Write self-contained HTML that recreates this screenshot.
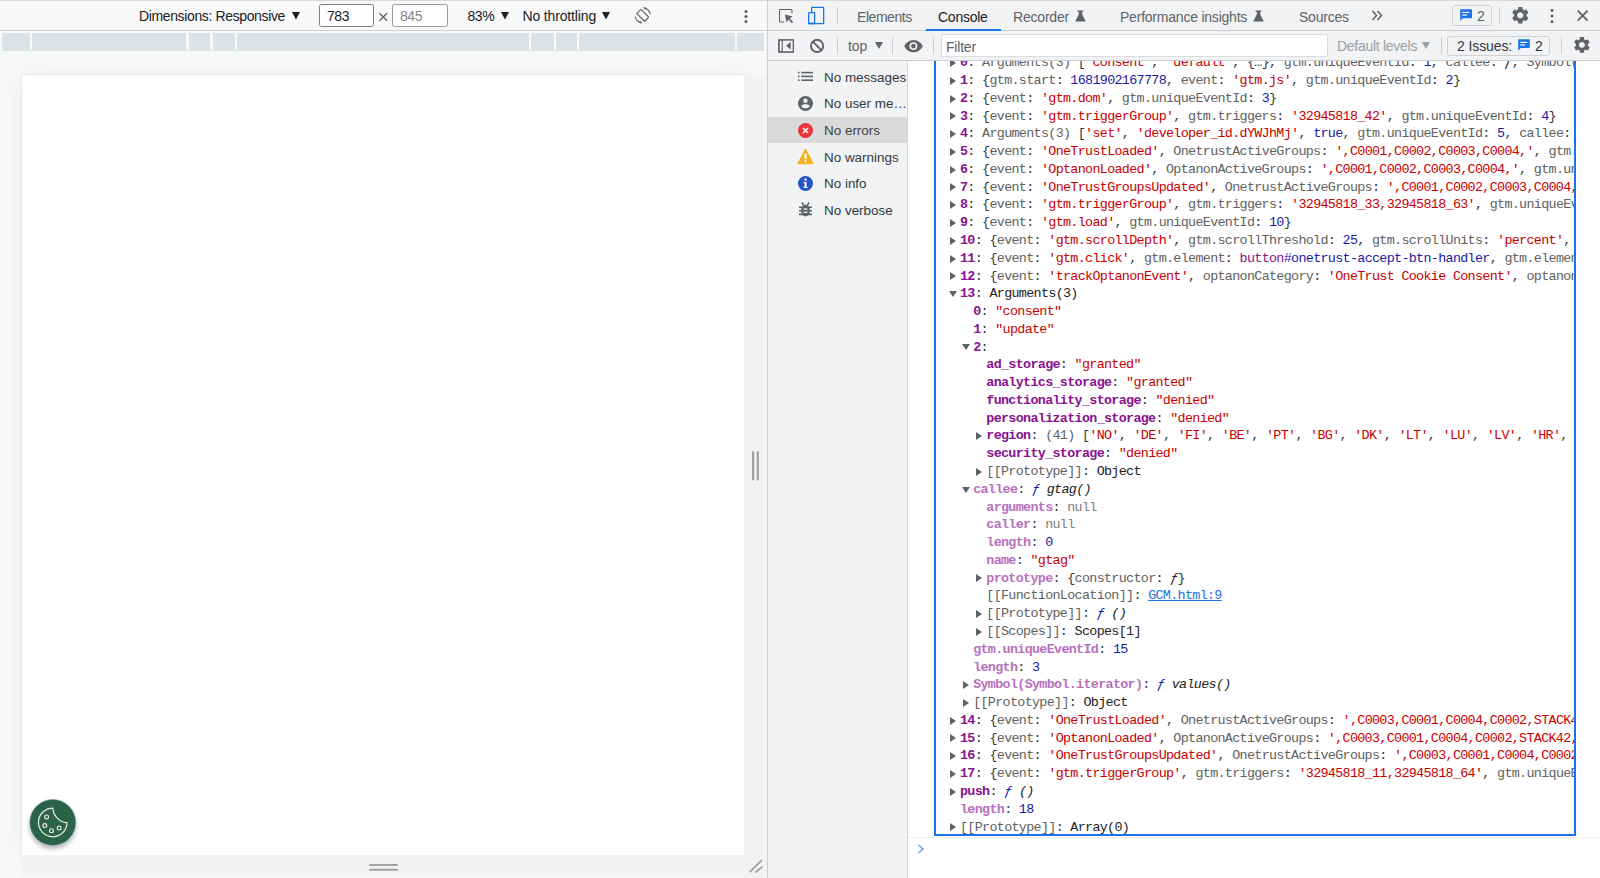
<!DOCTYPE html>
<html><head><meta charset="utf-8">
<style>
*{box-sizing:border-box;margin:0;padding:0}
html,body{width:1600px;height:878px;overflow:hidden;background:#f7f9f8;font-family:"Liberation Sans",sans-serif;}
.a{position:absolute}
.t{position:absolute;white-space:pre;font-size:14px;letter-spacing:-0.45px;line-height:16px;color:#202124}
/* left area */
#ltb{left:0;top:0;width:767px;height:31px;background:#f8f9f9;border-top:1px solid #d6d8da;border-bottom:1px solid #cdd0d4}
#ruler{left:2px;top:33px;width:762px;height:17.7px;background:#dee1e6}
.rsep{position:absolute;top:-0.5px;width:2.2px;height:17.5px;background:#f9fafa}
#vp{left:22px;top:75px;width:722px;height:780px;background:#fff;box-shadow:0 0 0 1px rgba(0,0,0,0.05),0 0 22px rgba(0,0,0,0.055)}
#rstrip{left:744px;top:75px;width:23px;height:803px;background:#f1f3f4}
#bstrip{left:22px;top:855px;width:745px;height:22px;background:#f1f3f4}
.inp{position:absolute;top:4px;height:23px;background:#fff;border:1px solid #7d7d7d;border-radius:2.5px}
/* devtools */
#dt{left:767px;top:0;width:833px;height:878px;background:#f1f3f4;border-left:1px solid #cdd0d4}
#tabs{left:768px;top:0;width:832px;height:31px;border-top:1px solid #d6d8da;border-bottom:1px solid #cacdd1;background:#f1f3f4}
#tb2{left:768px;top:31px;width:832px;height:30px;border-bottom:1px solid #cacdd1;background:#f1f3f4}
#side{left:768px;top:61px;width:140px;height:817px;background:#f1f3f4;border-right:1px solid #d3d5d8}
#con{left:908px;top:61px;width:692px;height:817px;background:#fff}
.sep{position:absolute;width:1px;background:#cacdd1}
.srow{position:absolute;left:768px;width:139px;height:26.6px}
.stxt{position:absolute;left:824px;font-size:13.45px;line-height:16px;color:#303942;white-space:pre}
/* console */
#clip{left:934px;top:61px;width:642px;height:776px;overflow:hidden}
#box{left:934px;top:61px;width:641.6px;height:774.7px;border:2.5px solid #1a73e8;border-top:none}
.ln{position:absolute;height:17.775px;line-height:17.775px;font-family:"Liberation Mono",monospace;font-size:13.4px;letter-spacing:-0.68px;white-space:pre;color:#303942}
.tri{position:absolute;width:0;height:0}
.tr{border-top:3.5px solid transparent;border-bottom:3.5px solid transparent;border-left:6px solid #5f6368}
.td{border-left:3.5px solid transparent;border-right:3.5px solid transparent;border-top:6px solid #5f6368}
.k{color:#881391;font-weight:bold}
.kd{color:#c17ec1;font-weight:bold}
.s{color:#c80000}
.n{color:#1a1aa6}
.g{color:#5e5e5e}
.b{color:#222}
.nl{color:#808080}
.f{color:#0d22aa;font-style:italic}
.i{font-style:italic;color:#222}
.lnk{color:#1a73e8;text-decoration:underline}

#clip i{font-style:normal}
.ln b{position:absolute;top:0;width:0;height:0}
.tr{left:-10px;margin-top:4.8px;border-top:4.1px solid transparent;border-bottom:4.1px solid transparent;border-left:6px solid #5f6368}
.td{left:-11.4px;margin-top:5.9px;border-left:4.1px solid transparent;border-right:4.1px solid transparent;border-top:6px solid #5f6368}
#clip .k{color:#881391;font-weight:bold}
#clip .d{color:#b871bd;font-weight:bold}
#clip .s{color:#c80000}
#clip .n{color:#1a1aa6}
#clip .g{color:#616161}
#clip .b{color:#222}
#clip .x{color:#808080}
#clip .f{color:#0d22aa;font-style:italic}
#clip .i{font-style:italic;color:#222}
#clip .l{color:#1a73e8;text-decoration:underline}
#clip .t{color:#881280;position:static;font-size:inherit;line-height:inherit;letter-spacing:inherit}
</style></head><body>

<!-- ============ LEFT DEVICE AREA ============ -->
<div class="a" id="ltb"></div>
<div class="t" style="left:139px;top:8px;color:#202124;letter-spacing:-0.37px">Dimensions: Responsive</div>
<svg class="a" style="left:291.5px;top:11.5px" width="8" height="7.5"><path d="M0 0H8L4 7.5Z" fill="#202124"/></svg>
<div class="inp" style="left:319px;width:55px"></div>
<div class="t" style="left:327px;top:7.6px">783</div>
<svg class="a" style="left:378px;top:12px" width="11" height="10"><path d="M1.4 1.2L9.1 8.8M9.1 1.2L1.4 8.8" stroke="#5f6368" stroke-width="1.35"/></svg>
<div class="inp" style="left:392px;width:56px;border-color:#9a9a9a"></div>
<div class="t" style="left:400px;top:7.6px;color:#80868b">845</div>
<div class="t" style="left:467.5px;top:8px">83%</div>
<svg class="a" style="left:501.2px;top:11.5px" width="8" height="7.5"><path d="M0 0H8L4 7.5Z" fill="#202124"/></svg>
<div class="t" style="left:522.5px;top:8px;letter-spacing:-0.15px">No throttling</div>
<svg class="a" style="left:601.5px;top:11.5px" width="8" height="7.5"><path d="M0 0H8L4 7.5Z" fill="#202124"/></svg>
<svg class="a" style="left:634px;top:7px" width="18" height="17" viewBox="0 0 18 17"><g transform="translate(8.75 8.3) rotate(-45)"><rect x="-3" y="-5.6" width="6" height="11.2" rx="0.9" fill="none" stroke="#5f6368" stroke-width="1.15"/></g><path d="M10.3 1.1A7.6 7.6 0 0 1 16.2 7" fill="none" stroke="#5f6368" stroke-width="1.15"/><path d="M7.2 15.6A7.6 7.6 0 0 1 1.3 9.6" fill="none" stroke="#5f6368" stroke-width="1.15"/><path d="M9.3 0.3L12.2 0.6L10.6 2.6Z" fill="#5f6368"/><path d="M8.2 16.4L5.3 16L6.9 14Z" fill="#5f6368"/></svg>
<svg class="a" style="left:742px;top:9px" width="8" height="15"><circle cx="4" cy="2.5" r="1.6" fill="#5f6368"/><circle cx="4" cy="7.5" r="1.6" fill="#5f6368"/><circle cx="4" cy="12.5" r="1.6" fill="#5f6368"/></svg>

<div class="a" id="ruler">
 <div class="rsep" style="left:27.5px"></div> <div class="rsep" style="left:184.4px"></div> <div class="rsep" style="left:208.4px"></div> <div class="rsep" style="left:233.2px"></div> <div class="rsep" style="left:526.8px"></div> <div class="rsep" style="left:552.0px"></div> <div class="rsep" style="left:575.2px"></div> <div class="rsep" style="left:733.0px"></div>
</div>
<div class="a" id="vp"></div>
<div class="a" id="rstrip"></div>
<div class="a" id="bstrip"></div>
<!-- cookie + handles -->
<svg class="a" style="left:26px;top:796px;overflow:visible" width="54" height="54" viewBox="0 0 54 54"><defs><filter id="sh" x="-50%" y="-50%" width="200%" height="200%"><feGaussianBlur in="SourceAlpha" stdDeviation="2.6"/><feOffset dy="2.5"/><feComponentTransfer><feFuncA type="linear" slope="0.32"/></feComponentTransfer><feMerge><feMergeNode/><feMergeNode in="SourceGraphic"/></feMerge></filter></defs>
<circle cx="26.75" cy="26.45" r="22.9" fill="#2b6247" stroke="#5d86a8" stroke-width="0.5" filter="url(#sh)"/>
<path d="M26.8 12.15A14.3 14.3 0 1 0 41.05 26.8A15.7 15.7 0 0 1 26.8 12.15Z" fill="none" stroke="#e6ebe3" stroke-width="1.25" stroke-linejoin="round"/>
<circle cx="20.6" cy="20.9" r="1.95" fill="none" stroke="#e6ebe3" stroke-width="1.15"/><circle cx="18.8" cy="29.5" r="1.95" fill="none" stroke="#e6ebe3" stroke-width="1.15"/><circle cx="25.5" cy="34.7" r="1.95" fill="none" stroke="#e6ebe3" stroke-width="1.15"/><circle cx="33.2" cy="32" r="1.95" fill="none" stroke="#e6ebe3" stroke-width="1.15"/></svg>
<svg class="a" style="left:750px;top:449px" width="12" height="34"><path d="M3.1 3V30.5M7.8 3V30.5" stroke="#a2a2a2" stroke-width="2.2" stroke-linecap="round"/></svg>
<svg class="a" style="left:367px;top:862px" width="33" height="11"><path d="M3 3H30M3 7.7H30" stroke="#a2a2a2" stroke-width="2" stroke-linecap="round"/></svg>
<svg class="a" style="left:748px;top:858px" width="16" height="16"><path d="M2.2 13.6L13.3 2.6M8 14L13.9 8.9" stroke="#a2a2a2" stroke-width="1.9" stroke-linecap="round"/></svg>


<!-- ============ DEVTOOLS ============ -->
<div class="a" id="dt"></div>
<div class="a" id="tabs"></div>
<div class="a" id="tb2"></div>
<div class="a" id="side"></div>
<div class="a" id="con"></div>

<!-- tab bar -->
<svg class="a" style="left:777px;top:7px" width="18" height="18" viewBox="0 0 18 18"><path d="M7 14.95H3.3Q2.55 14.95 2.55 14.2V3.3Q2.55 2.55 3.3 2.55H14.2Q14.95 2.55 14.95 3.3V6.3" fill="none" stroke="#5f6368" stroke-width="1.1"/><path d="M8 7.5L15.7 9.6L12.6 11.4L16.2 15L15 16.2L11.4 12.6L9.6 15.7Z" fill="#5f6368"/></svg>
<svg class="a" style="left:806px;top:5px" width="20" height="21" viewBox="0 0 20 21"><rect x="5.6" y="2.35" width="12.05" height="16.3" rx="0.8" fill="none" stroke="#1a73e8" stroke-width="1.25"/><rect x="2.65" y="7.65" width="5.95" height="10.95" rx="0.6" fill="#f1f3f4" stroke="#1a73e8" stroke-width="1.3"/><rect x="2" y="17.6" width="7" height="1.6" fill="#1a73e8"/></svg>
<div class="sep" style="left:837px;top:7px;height:17px"></div>
<div class="t" style="left:857px;top:8.5px;color:#5f6368">Elements</div>
<div class="t" style="left:938px;top:8.5px;color:#202124;letter-spacing:-0.25px">Console</div>
<div class="a" style="left:926px;top:29px;width:75px;height:2px;background:#1a73e8"></div>
<div class="t" style="left:1013px;top:8.5px;color:#5f6368;letter-spacing:-0.2px">Recorder</div>
<svg class="a" style="left:1074.5px;top:9.5px" width="11" height="12" viewBox="0 0 11 12"><path d="M2.5 0.5H8.5V1.8H7.2V4.5L10.8 11.5H0.2L3.8 4.5V1.8H2.5Z" fill="#5f6368"/></svg>
<div class="t" style="left:1120px;top:8.5px;color:#5f6368;letter-spacing:-0.22px">Performance insights</div>
<svg class="a" style="left:1252.5px;top:9.5px" width="11" height="12" viewBox="0 0 11 12"><path d="M2.5 0.5H8.5V1.8H7.2V4.5L10.8 11.5H0.2L3.8 4.5V1.8H2.5Z" fill="#5f6368"/></svg>
<div class="t" style="left:1299px;top:8.5px;color:#5f6368;letter-spacing:-0.22px">Sources</div>
<svg class="a" style="left:1371px;top:10px" width="12" height="11" viewBox="0 0 12 11"><path d="M1.5 1L5.5 5.5L1.5 10M6.5 1L10.5 5.5L6.5 10" fill="none" stroke="#5f6368" stroke-width="1.5"/></svg>
<div class="a" style="left:1452px;top:5px;width:40px;height:21px;border:1px solid #cfd1d4;border-radius:3px"></div>
<svg class="a" style="left:1460.3px;top:8.8px" width="12.2" height="12.2" viewBox="0 0 13 13"><path d="M1.2 0.2H11.8Q12.8 0.2 12.8 1.2V8.8Q12.8 9.8 11.8 9.8H3L0.2 12.6V1.2Q0.2 0.2 1.2 0.2Z" fill="#1a73e8"/><rect x="2.5" y="3" width="7.5" height="1.3" fill="#fff"/><rect x="2.5" y="5.8" width="5" height="1.3" fill="#fff"/></svg>
<div class="t" style="left:1477px;top:8px;color:#5f6368">2</div>
<div class="sep" style="left:1499px;top:7px;height:17px"></div>
<svg class="a" style="left:1509.7px;top:4.9px" width="20.6" height="20.6" viewBox="0 0 24 24"><path fill="#5f6368" d="M19.14 12.94c.04-.3.06-.61.06-.94 0-.32-.02-.64-.07-.94l2.03-1.58c.18-.14.23-.41.12-.61l-1.92-3.32c-.12-.22-.37-.29-.59-.22l-2.39.96c-.5-.38-1.03-.7-1.62-.94l-.36-2.54c-.04-.24-.24-.41-.48-.41h-3.84c-.24 0-.43.17-.47.41l-.36 2.54c-.59.24-1.13.57-1.62.94l-2.39-.96c-.22-.08-.47 0-.59.22L2.74 8.87c-.12.21-.08.47.12.61l2.03 1.58c-.05.3-.09.63-.09.94s.02.64.07.94l-2.03 1.58c-.18.14-.23.41-.12.61l1.92 3.32c.12.22.37.29.59.22l2.39-.96c.5.38 1.03.7 1.62.94l.36 2.54c.05.24.24.41.48.41h3.84c.24 0 .44-.17.47-.41l.36-2.54c.59-.24 1.13-.56 1.62-.94l2.39.96c.22.08.47 0 .59-.22l1.92-3.32c.12-.22.07-.47-.12-.61l-2.01-1.58zM12 15.6c-1.98 0-3.6-1.62-3.6-3.6s1.62-3.6 3.6-3.6 3.6 1.62 3.6 3.6-1.62 3.6-3.6 3.6z"/></svg>
<svg class="a" style="left:1547.5px;top:8px" width="8" height="16"><circle cx="4" cy="2.3" r="1.5" fill="#5f6368"/><circle cx="4" cy="8" r="1.5" fill="#5f6368"/><circle cx="4" cy="13.7" r="1.5" fill="#5f6368"/></svg>
<svg class="a" style="left:1576px;top:9px" width="14" height="14" viewBox="0 0 14 14"><path d="M1.7 1.7L11.6 11.6M11.6 1.7L1.7 11.6" stroke="#5f6368" stroke-width="1.85"/></svg>

<!-- toolbar 2 -->
<svg class="a" style="left:777px;top:38px" width="18" height="16" viewBox="0 0 18 16"><rect x="1.9" y="2" width="14.4" height="11.9" fill="#fff" stroke="#5f6368" stroke-width="1.3"/><rect x="5.2" y="2" width="11.1" height="11.9" fill="#f1f3f4"/><rect x="1.9" y="2" width="14.4" height="11.9" fill="none" stroke="#5f6368" stroke-width="1.3"/><path d="M5.2 1.5V14.5" stroke="#5f6368" stroke-width="1.2"/><path d="M13.7 3.8V11.6L9 7.7Z" fill="#5f6368"/></svg>
<svg class="a" style="left:809px;top:38px" width="16" height="16" viewBox="0 0 16 16"><circle cx="8.1" cy="7.9" r="6.1" fill="none" stroke="#5f6368" stroke-width="1.9"/><path d="M3.9 3.7L12.3 12.1" stroke="#5f6368" stroke-width="1.9"/></svg>
<div class="sep" style="left:837px;top:37px;height:17px"></div>
<div class="t" style="left:848px;top:38px;color:#5f6368;letter-spacing:-0.1px">top</div>
<svg class="a" style="left:875px;top:42px" width="8" height="7"><path d="M0 0H8L4 7Z" fill="#5f6368"/></svg>
<div class="sep" style="left:892px;top:37px;height:17px"></div>
<svg class="a" style="left:903.8px;top:39.5px" width="19" height="13" viewBox="0 0 19 13"><path d="M9.5 0.1C5 0.1 1.8 3.2 0.2 6.15C1.8 9.1 5 12.2 9.5 12.2S17.2 9.1 18.8 6.15C17.2 3.2 14 0.1 9.5 0.1Z" fill="#616366"/><circle cx="9.4" cy="6.1" r="3.95" fill="#f1f3f4"/><circle cx="9.4" cy="6.1" r="2.35" fill="#616366"/></svg>
<div class="sep" style="left:933px;top:37px;height:17px"></div>
<div class="a" style="left:941px;top:34px;width:387px;height:23px;background:#fff;border:1px solid #dadce0;border-radius:2px"></div>
<div class="t" style="left:946px;top:38.7px;color:#5f6368;letter-spacing:-0.2px">Filter</div>
<div class="t" style="left:1337px;top:38px;color:#9aa0a6;letter-spacing:-0.28px">Default levels</div>
<svg class="a" style="left:1422px;top:42px" width="8" height="7"><path d="M0 0H8L4 7Z" fill="#9aa0a6"/></svg>
<div class="sep" style="left:1441px;top:37px;height:17px"></div>
<div class="a" style="left:1447px;top:36px;width:103px;height:20px;border:1px solid #cfd1d4;border-radius:3px"></div>
<div class="t" style="left:1457px;top:38px;color:#303942;letter-spacing:-0.1px">2 Issues:</div>
<svg class="a" style="left:1518.2px;top:39.2px" width="12" height="12" viewBox="0 0 13 13"><path d="M1.2 0.2H11.8Q12.8 0.2 12.8 1.2V8.8Q12.8 9.8 11.8 9.8H3L0.2 12.6V1.2Q0.2 0.2 1.2 0.2Z" fill="#1a73e8"/><rect x="2.5" y="3" width="7.5" height="1.3" fill="#fff"/><rect x="2.5" y="5.8" width="5" height="1.3" fill="#fff"/></svg>
<div class="t" style="left:1535px;top:38px;color:#303942">2</div>
<div class="sep" style="left:1561px;top:37px;height:17px"></div>
<svg class="a" style="left:1572.4px;top:35.3px" width="19.8" height="19.8" viewBox="0 0 24 24"><path fill="#5f6368" d="M19.14 12.94c.04-.3.06-.61.06-.94 0-.32-.02-.64-.07-.94l2.03-1.58c.18-.14.23-.41.12-.61l-1.92-3.32c-.12-.22-.37-.29-.59-.22l-2.39.96c-.5-.38-1.030-.7-1.62-.94l-.36-2.54c-.04-.24-.24-.41-.48-.41h-3.84c-.24 0-.43.17-.47.41l-.36 2.54c-.59.24-1.13.57-1.62.94l-2.39-.96c-.22-.08-.47 0-.59.22L2.74 8.870c-.12.21-.08.47.12.61l2.03 1.58c-.05.3-.09.63-.09.94s.02.64.07.94l-2.03 1.58c-.18.14-.23.41-.12.61l1.92 3.32c.12.22.37.29.59.22l2.39-.96c.5.38 1.03.7 1.62.94l.36 2.54c.05.24.24.41.48.41h3.84c.24 0 .44-.17.47-.41l.36-2.54c.59-.24 1.13-.56 1.62-.94l2.39.96c.22.08.47 0 .59-.22l1.92-3.32c.12-.22.07-.47-.12-.61l-2.010-1.58zM12 15.6c-1.98 0-3.6-1.62-3.6-3.6s1.62-3.6 3.6-3.6 3.6 1.62 3.6 3.6-1.62 3.6-3.6 3.6z"/></svg>



<!-- sidebar -->
<div class="a" style="left:768px;top:117px;width:139px;height:26px;background:#dadada"></div>
<svg class="a" style="left:797px;top:71px" width="17" height="11" viewBox="0 0 17 11"><rect x="1" y="0.8" width="1.6" height="1.6" fill="#5f6368"/><rect x="1" y="4.6" width="1.6" height="1.6" fill="#5f6368"/><rect x="1" y="8.4" width="1.6" height="1.6" fill="#5f6368"/><rect x="4.3" y="0.8" width="11.7" height="1.6" fill="#5f6368"/><rect x="4.3" y="4.6" width="11.7" height="1.6" fill="#5f6368"/><rect x="4.3" y="8.4" width="11.7" height="1.6" fill="#5f6368"/></svg>
<div class="stxt" style="top:69.5px">No messages</div>
<svg class="a" style="left:797px;top:95px" width="17" height="17" viewBox="0 0 17 17"><circle cx="8.5" cy="8.5" r="7.5" fill="#5f6368"/><circle cx="8.5" cy="5.8" r="2.2" fill="#f1f3f4"/><path d="M4.2 11.2C5 9.8 6.6 9.2 8.5 9.2S12 9.8 12.8 11.2C11.8 12.6 10.3 13.3 8.5 13.3S5.2 12.6 4.2 11.2Z" fill="#f1f3f4"/></svg>
<div class="stxt" style="top:96.0px">No user me…</div>
<svg class="a" style="left:797px;top:122px" width="17" height="17" viewBox="0 0 17 17"><circle cx="8.5" cy="8.5" r="7.5" fill="#e8353e"/><path d="M6 6L11 11M11 6L6 11" stroke="#fff" stroke-width="1.5"/></svg>
<div class="stxt" style="top:123.0px;color:#3c4043">No errors</div>
<svg class="a" style="left:797px;top:148px" width="17" height="17" viewBox="0 0 17 17"><path d="M8.5 0.8L16.3 15.8H0.7Z" fill="#f2b01e" stroke="#f2b01e" stroke-width="0.8" stroke-linejoin="round"/><rect x="7.5" y="5.5" width="2" height="5.5" fill="#fff"/><rect x="7.5" y="12.2" width="2" height="1.8" fill="#fff"/></svg>
<div class="stxt" style="top:149.5px">No warnings</div>
<svg class="a" style="left:797px;top:175px" width="17" height="17" viewBox="0 0 17 17"><circle cx="8.5" cy="8.5" r="7.5" fill="#2555c9"/><circle cx="8.5" cy="4.6" r="1.2" fill="#fff"/><path d="M6.8 7H9.5V11.8H10.5V13H6.6V11.8H7.6V8.2H6.8Z" fill="#fff"/></svg>
<div class="stxt" style="top:176.0px">No info</div>
<svg class="a" style="left:797px;top:201px" width="17" height="17" viewBox="0 0 17 17"><ellipse cx="8.5" cy="9.6" rx="4.5" ry="6" fill="#5f6368"/><path d="M2 6.2H15M2 9.8H15M2 13.4H15M5 1.5L6.5 4M12 1.5L10.5 4" stroke="#5f6368" stroke-width="1.6"/><rect x="6.6" y="7.4" width="3.8" height="1.3" fill="#f1f3f4"/><rect x="6.6" y="10.6" width="3.8" height="1.3" fill="#f1f3f4"/></svg>
<div class="stxt" style="top:202.5px">No verbose</div>

<!-- console -->
<div class="a" id="clip">
<div class="ln" style="top:-6.80px;left:26.00px"><b class="tr"></b><i class="k">0</i>: <i class="g">Arguments(3)</i> [<i class="s">&#x27;consent&#x27;</i>, <i class="s">&#x27;default&#x27;</i>, {…}, <i class="g">gtm.uniqueEventId</i>: <i class="n">1</i>, <i class="g">callee</i>: <i class="i">ƒ</i>, <i class="g">Symbol(Symbol.iterator)</i>: <i class="i">ƒ</i>]</div>
<div class="ln" style="top:10.97px;left:26.00px"><b class="tr"></b><i class="k">1</i>: {<i class="g">gtm.start</i>: <i class="n">1681902167778</i>, <i class="g">event</i>: <i class="s">&#x27;gtm.js&#x27;</i>, <i class="g">gtm.uniqueEventId</i>: <i class="n">2</i>}</div>
<div class="ln" style="top:28.75px;left:26.00px"><b class="tr"></b><i class="k">2</i>: {<i class="g">event</i>: <i class="s">&#x27;gtm.dom&#x27;</i>, <i class="g">gtm.uniqueEventId</i>: <i class="n">3</i>}</div>
<div class="ln" style="top:46.53px;left:26.00px"><b class="tr"></b><i class="k">3</i>: {<i class="g">event</i>: <i class="s">&#x27;gtm.triggerGroup&#x27;</i>, <i class="g">gtm.triggers</i>: <i class="s">&#x27;32945818_42&#x27;</i>, <i class="g">gtm.uniqueEventId</i>: <i class="n">4</i>}</div>
<div class="ln" style="top:64.30px;left:26.00px"><b class="tr"></b><i class="k">4</i>: <i class="g">Arguments(3)</i> [<i class="s">&#x27;set&#x27;</i>, <i class="s">&#x27;developer_id.dYWJhMj&#x27;</i>, <i class="n">true</i>, <i class="g">gtm.uniqueEventId</i>: <i class="n">5</i>, <i class="g">callee</i>: <i class="i">ƒ</i>, <i class="g">Symbol(Symbol.iterator)</i>: <i class="i">ƒ</i>]</div>
<div class="ln" style="top:82.07px;left:26.00px"><b class="tr"></b><i class="k">5</i>: {<i class="g">event</i>: <i class="s">&#x27;OneTrustLoaded&#x27;</i>, <i class="g">OnetrustActiveGroups</i>: <i class="s">&#x27;,C0001,C0002,C0003,C0004,&#x27;</i>, <i class="g">gtm.uniqueEventId</i>: <i class="n">6</i>}</div>
<div class="ln" style="top:99.85px;left:26.00px"><b class="tr"></b><i class="k">6</i>: {<i class="g">event</i>: <i class="s">&#x27;OptanonLoaded&#x27;</i>, <i class="g">OptanonActiveGroups</i>: <i class="s">&#x27;,C0001,C0002,C0003,C0004,&#x27;</i>, <i class="g">gtm.uniqueEventId</i>: <i class="n">7</i>}</div>
<div class="ln" style="top:117.62px;left:26.00px"><b class="tr"></b><i class="k">7</i>: {<i class="g">event</i>: <i class="s">&#x27;OneTrustGroupsUpdated&#x27;</i>, <i class="g">OnetrustActiveGroups</i>: <i class="s">&#x27;,C0001,C0002,C0003,C0004,&#x27;</i>, <i class="g">gtm.uniqueEventId</i>: <i class="n">8</i>}</div>
<div class="ln" style="top:135.40px;left:26.00px"><b class="tr"></b><i class="k">8</i>: {<i class="g">event</i>: <i class="s">&#x27;gtm.triggerGroup&#x27;</i>, <i class="g">gtm.triggers</i>: <i class="s">&#x27;32945818_33,32945818_63&#x27;</i>, <i class="g">gtm.uniqueEventId</i>: <i class="n">9</i>}</div>
<div class="ln" style="top:153.18px;left:26.00px"><b class="tr"></b><i class="k">9</i>: {<i class="g">event</i>: <i class="s">&#x27;gtm.load&#x27;</i>, <i class="g">gtm.uniqueEventId</i>: <i class="n">10</i>}</div>
<div class="ln" style="top:170.95px;left:26.00px"><b class="tr"></b><i class="k">10</i>: {<i class="g">event</i>: <i class="s">&#x27;gtm.scrollDepth&#x27;</i>, <i class="g">gtm.scrollThreshold</i>: <i class="n">25</i>, <i class="g">gtm.scrollUnits</i>: <i class="s">&#x27;percent&#x27;</i>, <i class="g">gtm.scrollDirection</i>: <i class="s">&#x27;vertical&#x27;</i>}</div>
<div class="ln" style="top:188.72px;left:26.00px"><b class="tr"></b><i class="k">11</i>: {<i class="g">event</i>: <i class="s">&#x27;gtm.click&#x27;</i>, <i class="g">gtm.element</i>: <i class="t">button</i><i class="n">#onetrust-accept-btn-handler</i>, <i class="g">gtm.elementClasses</i>: <i class="s">&#x27;&#x27;</i>}</div>
<div class="ln" style="top:206.50px;left:26.00px"><b class="tr"></b><i class="k">12</i>: {<i class="g">event</i>: <i class="s">&#x27;trackOptanonEvent&#x27;</i>, <i class="g">optanonCategory</i>: <i class="s">&#x27;OneTrust Cookie Consent&#x27;</i>, <i class="g">optanonAction</i>: <i class="s">&#x27;Accept All&#x27;</i>}</div>
<div class="ln" style="top:224.27px;left:26.00px"><b class="td"></b><i class="k">13</i>: <i class="b">Arguments(3)</i></div>
<div class="ln" style="top:242.05px;left:39.15px"><i class="k">0</i>: <i class="s">&quot;consent&quot;</i></div>
<div class="ln" style="top:259.82px;left:39.15px"><i class="k">1</i>: <i class="s">&quot;update&quot;</i></div>
<div class="ln" style="top:277.60px;left:39.15px"><b class="td"></b><i class="k">2</i>:</div>
<div class="ln" style="top:295.37px;left:52.30px"><i class="k">ad_storage</i>: <i class="s">&quot;granted&quot;</i></div>
<div class="ln" style="top:313.15px;left:52.30px"><i class="k">analytics_storage</i>: <i class="s">&quot;granted&quot;</i></div>
<div class="ln" style="top:330.92px;left:52.30px"><i class="k">functionality_storage</i>: <i class="s">&quot;denied&quot;</i></div>
<div class="ln" style="top:348.70px;left:52.30px"><i class="k">personalization_storage</i>: <i class="s">&quot;denied&quot;</i></div>
<div class="ln" style="top:366.47px;left:52.30px"><b class="tr"></b><i class="k">region</i>: <i class="g">(41)</i> [<i class="s">&#x27;NO&#x27;</i>, <i class="s">&#x27;DE&#x27;</i>, <i class="s">&#x27;FI&#x27;</i>, <i class="s">&#x27;BE&#x27;</i>, <i class="s">&#x27;PT&#x27;</i>, <i class="s">&#x27;BG&#x27;</i>, <i class="s">&#x27;DK&#x27;</i>, <i class="s">&#x27;LT&#x27;</i>, <i class="s">&#x27;LU&#x27;</i>, <i class="s">&#x27;LV&#x27;</i>, <i class="s">&#x27;HR&#x27;</i>, <i class="s">&#x27;FR&#x27;</i>, <i class="s">&#x27;HU&#x27;</i>]</div>
<div class="ln" style="top:384.25px;left:52.30px"><i class="k">security_storage</i>: <i class="s">&quot;denied&quot;</i></div>
<div class="ln" style="top:402.02px;left:52.30px"><b class="tr"></b><i class="g">[[Prototype]]</i>: <i class="b">Object</i></div>
<div class="ln" style="top:419.80px;left:39.15px"><b class="td"></b><i class="d">callee</i>: <i class="f">ƒ</i> <i class="i">gtag()</i></div>
<div class="ln" style="top:437.57px;left:52.30px"><i class="d">arguments</i>: <i class="x">null</i></div>
<div class="ln" style="top:455.35px;left:52.30px"><i class="d">caller</i>: <i class="x">null</i></div>
<div class="ln" style="top:473.12px;left:52.30px"><i class="d">length</i>: <i class="n">0</i></div>
<div class="ln" style="top:490.90px;left:52.30px"><i class="d">name</i>: <i class="s">&quot;gtag&quot;</i></div>
<div class="ln" style="top:508.67px;left:52.30px"><b class="tr"></b><i class="d">prototype</i>: {<i class="g">constructor</i>: <i class="i">ƒ</i>}</div>
<div class="ln" style="top:526.45px;left:52.30px"><i class="g">[[FunctionLocation]]</i>: <i class="l">GCM.html:9</i></div>
<div class="ln" style="top:544.23px;left:52.30px"><b class="tr"></b><i class="g">[[Prototype]]</i>: <i class="f">ƒ</i> <i class="i">()</i></div>
<div class="ln" style="top:562.00px;left:52.30px"><b class="tr"></b><i class="g">[[Scopes]]</i>: <i class="b">Scopes[1]</i></div>
<div class="ln" style="top:579.77px;left:39.15px"><i class="d">gtm.uniqueEventId</i>: <i class="n">15</i></div>
<div class="ln" style="top:597.55px;left:39.15px"><i class="d">length</i>: <i class="n">3</i></div>
<div class="ln" style="top:615.33px;left:39.15px"><b class="tr"></b><i class="d">Symbol(Symbol.iterator)</i>: <i class="f">ƒ</i> <i class="i">values()</i></div>
<div class="ln" style="top:633.10px;left:39.15px"><b class="tr"></b><i class="g">[[Prototype]]</i>: <i class="b">Object</i></div>
<div class="ln" style="top:650.88px;left:26.00px"><b class="tr"></b><i class="k">14</i>: {<i class="g">event</i>: <i class="s">&#x27;OneTrustLoaded&#x27;</i>, <i class="g">OnetrustActiveGroups</i>: <i class="s">&#x27;,C0003,C0001,C0004,C0002,STACK42,&#x27;</i>, <i class="g">gtm.uniqueEventId</i>: <i class="n">15</i>}</div>
<div class="ln" style="top:668.65px;left:26.00px"><b class="tr"></b><i class="k">15</i>: {<i class="g">event</i>: <i class="s">&#x27;OptanonLoaded&#x27;</i>, <i class="g">OptanonActiveGroups</i>: <i class="s">&#x27;,C0003,C0001,C0004,C0002,STACK42,&#x27;</i>, <i class="g">gtm.uniqueEventId</i>: <i class="n">16</i>}</div>
<div class="ln" style="top:686.42px;left:26.00px"><b class="tr"></b><i class="k">16</i>: {<i class="g">event</i>: <i class="s">&#x27;OneTrustGroupsUpdated&#x27;</i>, <i class="g">OnetrustActiveGroups</i>: <i class="s">&#x27;,C0003,C0001,C0004,C0002,STACK42,&#x27;</i>, <i class="g">gtm.uniqueEventId</i>: <i class="n">17</i>}</div>
<div class="ln" style="top:704.20px;left:26.00px"><b class="tr"></b><i class="k">17</i>: {<i class="g">event</i>: <i class="s">&#x27;gtm.triggerGroup&#x27;</i>, <i class="g">gtm.triggers</i>: <i class="s">&#x27;32945818_11,32945818_64&#x27;</i>, <i class="g">gtm.uniqueEventId</i>: <i class="n">18</i>}</div>
<div class="ln" style="top:721.98px;left:26.00px"><b class="tr"></b><i class="k">push</i>: <i class="f">ƒ</i> <i class="i">()</i></div>
<div class="ln" style="top:739.75px;left:26.00px"><i class="d">length</i>: <i class="n">18</i></div>
<div class="ln" style="top:757.52px;left:26.00px"><b class="tr"></b><i class="g">[[Prototype]]</i>: <i class="b">Array(0)</i></div>
</div>
<div class="a" id="box"></div>
<div class="a" style="left:908px;top:837px;width:692px;height:1px;background:#efefef"></div>
<svg class="a" style="left:917px;top:844px" width="8" height="10" viewBox="0 0 8 10"><path d="M1.5 1L6 5L1.5 9" fill="none" stroke="#6c9ef8" stroke-width="1.5"/></svg>

</body></html>
